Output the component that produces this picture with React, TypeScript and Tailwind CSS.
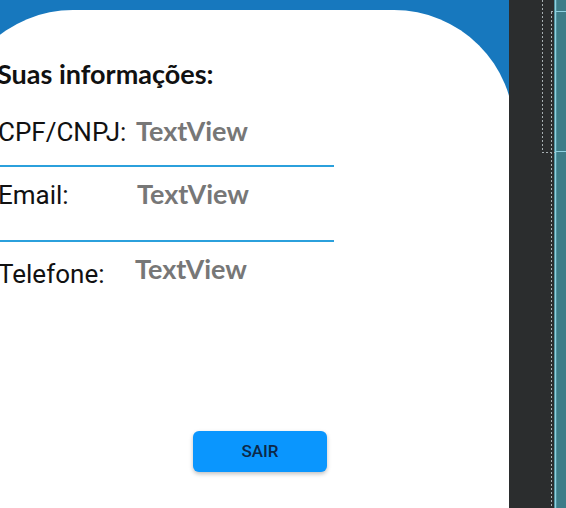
export default function App() {
  return (
    <div className="flex w-[566px] h-[508px] overflow-hidden bg-[#2b2d2e]">
      {/* phone preview */}
      <div className="w-[509px] h-[508px] shrink-0 overflow-hidden bg-[#1778be]">
        <div className="ml-[-47px] mt-[10px] w-[561px] h-[498px] rounded-t-[120px] bg-white pl-[44px] pt-[49px]">
          <h1 className="h-[31px] font-['Lato'] font-bold text-[27px] leading-[30px] text-[#111] whitespace-nowrap">
            Suas informações:
          </h1>

          <div className="mt-[24px] w-[337px]">
            <div className="flex items-baseline h-[51px] pt-[2px] pl-[1px]">
              <span className="w-[138px] font-['Roboto'] text-[26px] leading-[30px] text-[#111]">CPF/CNPJ:</span>
              <span className="font-['Lato'] font-bold text-[27px] leading-[30px] text-[#777]">TextView</span>
            </div>
            <div className="h-[2px] bg-[#2ba0dc]" />
            <div className="flex items-baseline h-[73px] pt-[12px] pl-[1px]">
              <span className="w-[139px] font-['Roboto'] text-[26px] leading-[30px] text-[#111]">Email:</span>
              <span className="font-['Lato'] font-bold text-[27px] leading-[30px] text-[#777]">TextView</span>
            </div>
            <div className="h-[2px] bg-[#2ba0dc]" />
            <div className="flex items-start h-[48px] pt-[12px] pl-[1px]">
              <span className="w-[137px] pt-[5px] font-['Roboto'] text-[26px] leading-[30px] text-[#111]">Telefone:</span>
              <span className="font-['Lato'] font-bold text-[27px] leading-[30px] text-[#777]">TextView</span>
            </div>
          </div>

          <div className="mt-[141px] ml-[196px]">
            <button className="w-[134px] h-[41px] rounded-[6px] bg-[#0a96fe] shadow-[0_2px_4px_rgba(0,0,0,0.25)] font-['Roboto'] font-medium text-[17px] text-[#0d2848]">
              SAIR
            </button>
          </div>
        </div>
      </div>

      {/* editor side panel */}
      <svg width="57" height="508" viewBox="0 0 57 508" className="shrink-0">
        <rect x="45" y="0" width="12" height="508" fill="#3d7c88" />
        <line x1="46.5" y1="0" x2="46.5" y2="508" stroke="#8fd0e0" strokeWidth="1.5" />
        <line x1="46" y1="11.5" x2="57" y2="11.5" stroke="#8fd0e0" strokeWidth="1" />
        <line x1="46" y1="151.5" x2="57" y2="151.5" stroke="#8fd0e0" strokeWidth="1" />
        <line x1="33.5" y1="0" x2="33.5" y2="152" stroke="#a8b0b3" strokeWidth="1" strokeDasharray="2 2" />
        <line x1="33" y1="152.5" x2="46" y2="152.5" stroke="#a8b0b3" strokeWidth="1" strokeDasharray="2 2" />
        <line x1="42.5" y1="12" x2="42.5" y2="508" stroke="#a8b0b3" strokeWidth="1" strokeDasharray="2 2" />
        <line x1="42" y1="11.5" x2="46" y2="11.5" stroke="#a8b0b3" strokeWidth="1" strokeDasharray="2 2" />
      </svg>
    </div>
  );
}
